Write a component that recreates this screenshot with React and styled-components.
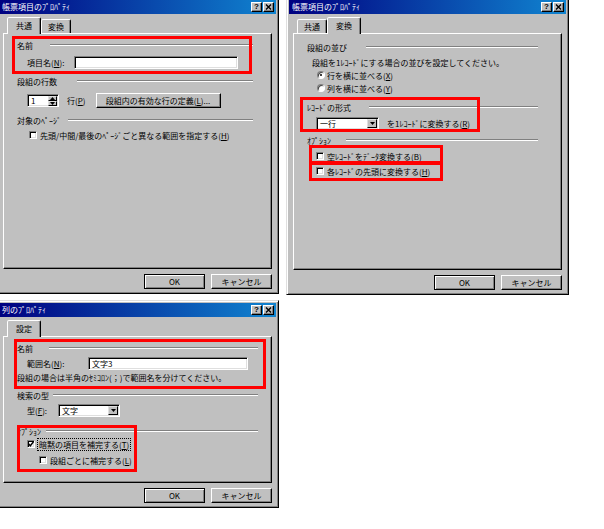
import styled, { createGlobalStyle, css } from 'styled-components';

const GlobalStyle = createGlobalStyle`
  html, body {
    margin: 0;
    padding: 0;
    background: #fff;
  }
  body {
    font-family: 'Noto Sans CJK JP', 'Noto Sans', sans-serif;
    font-size: 8px;
    color: #000;
    overflow: hidden;
  }
`;

const Page = styled.div`
  display: flex;
  flex-direction: column;
  align-items: flex-start;
  width: 604px;
  height: 529px;
`;

const TopRow = styled.div`
  display: flex;
  align-items: flex-start;
  gap: 7px;
`;

const Window = styled.div`
  box-sizing: border-box;
  display: flex;
  flex-direction: column;
  width: 283px;
  height: ${(p) => p.$h}px;
  margin: ${(p) => p.$mt || 0}px 0 0 ${(p) => p.$ml || 0}px;
  padding: 2px;
  background: #c0c0c0;
  border: 1px solid;
  border-color: #dfdfdf #000 #000 #dfdfdf;
  box-shadow: inset 1px 1px #fff, inset -1px -1px #808080;
`;

const TitleBar = styled.div`
  display: flex;
  align-items: center;
  justify-content: space-between;
  height: 14px;
  padding: 0 2px 0 3px;
  background: linear-gradient(90deg, #000080 0%, #1084d0 100%);
  color: #fff;
  white-space: nowrap;
`;

const TitleText = styled.span`
  line-height: 14px;
`;

const TitleButtons = styled.div`
  display: flex;
  gap: 1px;
`;

const TitleButton = styled.div`
  box-sizing: border-box;
  display: flex;
  align-items: center;
  justify-content: center;
  width: 11px;
  height: 10px;
  background: #c0c0c0;
  border: 1px solid;
  border-color: #fff #000 #000 #fff;
  box-shadow: inset -1px -1px #808080;
  color: #000;
  font-family: 'Liberation Sans', sans-serif;
  font-weight: 700;
  font-size: 8px;
  line-height: 1;
`;

const Body = styled.div`
  flex: 1;
  display: flex;
  flex-direction: column;
  padding: 3px 4px 2px 4px;
  min-height: 0;
`;

const TabStrip = styled.div`
  display: flex;
  align-items: flex-end;
  height: 16px;
  padding-left: 4px;
  position: relative;
  z-index: 1;
`;

const Tab = styled.div`
  box-sizing: border-box;
  display: flex;
  align-items: center;
  height: 14px;
  padding: 0 6px;
  background: #c0c0c0;
  border: 1px solid;
  border-bottom: none;
  border-color: #fff #000 transparent #fff;
  border-radius: 2px 2px 0 0;
  box-shadow: inset -1px 0 #808080;
  white-space: nowrap;

  ${(p) =>
    p.$active &&
    css`
      height: 17px;
      padding: 0 8px 1px;
      margin-bottom: -1px;
    `}
`;

const Panel = styled.div`
  flex: 1;
  position: relative;
  display: flex;
  flex-direction: column;
  padding: ${(p) => p.$pt}px ${(p) => p.$pr}px 0 13px;
  border: 1px solid;
  border-color: #fff #000 #000 #fff;
  box-shadow: inset -1px -1px #808080;
`;

const RedBox = styled.div`
  position: absolute;
  box-sizing: border-box;
  left: ${(p) => p.$x}px;
  top: ${(p) => p.$y}px;
  width: ${(p) => p.$w}px;
  height: ${(p) => p.$h}px;
  border: 3px solid #f00;
  pointer-events: none;
`;

const ButtonRow = styled.div`
  display: flex;
  justify-content: flex-end;
  gap: 6px;
  margin-top: 5px;
`;

const PushButton = styled.button`
  box-sizing: border-box;
  display: flex;
  align-items: center;
  justify-content: center;
  width: ${(p) => p.$w}px;
  height: 15px;
  margin: 0;
  padding: 0;
  background: #c0c0c0;
  border: 1px solid;
  border-color: ${(p) => (p.$default ? '#000' : '#fff #000 #000 #fff')};
  box-shadow: ${(p) =>
    p.$default
      ? 'inset 1px 1px #fff, inset -1px -1px #808080'
      : 'inset -1px -1px #808080'};
  font-family: inherit;
  font-size: 8px;
  color: #000;
  white-space: nowrap;
  margin-left: ${(p) => p.$ml || 0}px;
`;

const GroupHeader = styled.div`
  display: grid;
  grid-template-columns: ${(p) => p.$lineAt}px 1fr;
  align-items: center;
  height: 12px;
  margin-top: ${(p) => p.$mt || 0}px;
  white-space: nowrap;
`;

const Etch = styled.div`
  height: 0;
  border-top: 1px solid #808080;
  border-bottom: 1px solid #fff;
`;

const Row = styled.div`
  display: flex;
  align-items: center;
  height: ${(p) => p.$h || 12}px;
  margin-top: ${(p) => p.$mt || 0}px;
  padding-left: ${(p) => p.$indent || 0}px;
  white-space: nowrap;
`;

const FieldLabel = styled.span`
  flex-shrink: 0;
  width: ${(p) => p.$w}px;
`;

const Text = styled.span`
  margin-left: ${(p) => p.$ml || 0}px;
`;

const Key = styled.span`
  text-decoration: underline;
`;

const sunken = css`
  box-sizing: border-box;
  background: #fff;
  border: 1px solid;
  border-color: #808080 #fff #fff #808080;
  box-shadow: inset 1px 1px #000, inset -1px -1px #dfdfdf;
`;

const TextField = styled.div`
  ${sunken};
  display: flex;
  align-items: center;
  width: ${(p) => p.$w}px;
  height: 13px;
  padding-left: 3px;
`;

const SpinField = styled.div`
  ${sunken};
  display: flex;
  width: 32px;
  height: 13px;
  padding: 1px;
`;

const SpinValue = styled.span`
  flex: 1;
  line-height: 9px;
  padding-left: 2px;
`;

const SpinButtons = styled.div`
  display: flex;
  flex-direction: column;
  width: 9px;
`;

const SmallRaised = styled.div`
  box-sizing: border-box;
  display: flex;
  align-items: center;
  justify-content: center;
  background: #c0c0c0;
  border: 1px solid;
  border-color: #dfdfdf #000 #000 #dfdfdf;
`;

const SpinHalf = styled(SmallRaised)`
  flex: 1;
`;

const Select = styled.div`
  ${sunken};
  display: flex;
  align-items: center;
  justify-content: space-between;
  width: ${(p) => p.$w}px;
  height: 13px;
  padding: 1px 1px 1px 3px;
`;

const DropButton = styled(SmallRaised)`
  width: 10px;
  height: 9px;
`;

const CheckBox = styled.span`
  ${sunken};
  display: inline-flex;
  align-items: center;
  justify-content: center;
  flex-shrink: 0;
  width: 8px;
  height: 8px;
  margin-right: 3px;
`;

const Radio = styled.span`
  box-sizing: border-box;
  display: inline-flex;
  align-items: center;
  justify-content: center;
  flex-shrink: 0;
  width: 8px;
  height: 8px;
  margin-right: 2px;
  border-radius: 50%;
  background: #fff;
  border: 1px solid;
  border-color: #808080 #fff #fff #808080;
  box-shadow: inset 1px 1px #404040;

  &::after {
    content: '';
    display: ${(p) => (p.$on ? 'block' : 'none')};
    width: 2px;
    height: 2px;
    background: #000;
    border-radius: 50%;
  }
`;

const Focus = styled.span`
  outline: 1px dotted #000;
  padding: 0 1px;
`;

function Arrow({ up }) {
  return (
    <svg width="5" height="3" viewBox="0 0 5 3">
      <polygon points={up ? '0,3 5,3 2.5,0' : '0,0 5,0 2.5,3'} fill="#000" />
    </svg>
  );
}

function Dialog({ title, tabs, active, height, ml, mt, pt, pr, boxes, children }) {
  return (
    <Window $h={height} $ml={ml} $mt={mt}>
      <TitleBar>
        <TitleText>{title}</TitleText>
        <TitleButtons>
          <TitleButton>?</TitleButton>
          <TitleButton>
            <svg width="7" height="6" viewBox="0 0 7 6">
              <path d="M1 0.5L6 5.5M6 0.5L1 5.5" stroke="#000" strokeWidth="1.4" />
            </svg>
          </TitleButton>
        </TitleButtons>
      </TitleBar>
      <Body>
        <TabStrip>
          {tabs.map((t) => (
            <Tab key={t} $active={t === active}>
              {t}
            </Tab>
          ))}
        </TabStrip>
        <Panel $pt={pt} $pr={pr}>
          {children}
          {boxes.map((b, i) => (
            <RedBox key={i} $x={b[0]} $y={b[1]} $w={b[2]} $h={b[3]} />
          ))}
        </Panel>
        <ButtonRow>
          <PushButton $w={61} $default>
            OK
          </PushButton>
          <PushButton $w={61}>キャンセル</PushButton>
        </ButtonRow>
      </Body>
    </Window>
  );
}

function Check({ checked }) {
  return (
    <CheckBox>
      {checked && (
        <svg width="6" height="6" viewBox="0 0 6 6">
          <polyline points="0.5,2.8 2.3,4.8 5.5,0.8" fill="none" stroke="#000" strokeWidth="1.4" />
        </svg>
      )}
    </CheckBox>
  );
}

function CommonDialog() {
  return (
    <Dialog
      title="帳票項目のﾌﾟﾛﾊﾟﾃｨ"
      tabs={['共通', '変換']}
      active="共通"
      height={297}
      ml={-4}
      mt={-3}
      pt={5}
      pr={18}
      boxes={[[8, 2, 240, 38]]}
    >
      <GroupHeader $lineAt={33}>
        <span>名前</span>
        <Etch />
      </GroupHeader>
      <Row $h={13} $mt={5} $indent={10}>
        <FieldLabel $w={47}>
          項目名(<Key>N</Key>):
        </FieldLabel>
        <TextField $w={164} />
      </Row>
      <GroupHeader $lineAt={60} $mt={6}>
        <span>段組の行数</span>
        <Etch />
      </GroupHeader>
      <Row $h={15} $mt={6} $indent={10}>
        <SpinField>
          <SpinValue>1</SpinValue>
          <SpinButtons>
            <SpinHalf>
              <Arrow up />
            </SpinHalf>
            <SpinHalf>
              <Arrow />
            </SpinHalf>
          </SpinButtons>
        </SpinField>
        <Text $ml={8}>
          行(<Key>P</Key>)
        </Text>
        <PushButton $w={125} $ml={10}>
          段組内の有効な行の定義(<Key>L</Key>)...
        </PushButton>
      </Row>
      <GroupHeader $lineAt={51} $mt={6}>
        <span>対象のﾍﾟｰｼﾞ</span>
        <Etch />
      </GroupHeader>
      <Row $mt={3} $indent={12}>
        <Check />
        <span>
          先頭/中間/最後のﾍﾟｰｼﾞごと異なる範囲を指定する(<Key>H</Key>)
        </span>
      </Row>
    </Dialog>
  );
}

function ConvertDialog() {
  return (
    <Dialog
      title="帳票項目のﾌﾟﾛﾊﾟﾃｨ"
      tabs={['共通', '変換']}
      active="変換"
      height={298}
      mt={-3}
      pt={7}
      pr={23}
      boxes={[
        [6, 63, 180, 35],
        [15, 111, 134, 19],
        [15, 128, 134, 19],
      ]}
    >
      <GroupHeader $lineAt={59}>
        <span>段組の並び</span>
        <Etch />
      </GroupHeader>
      <Row $mt={3} $indent={5}>
        段組を1ﾚｺｰﾄﾞにする場合の並びを設定してください。
      </Row>
      <Row $mt={1} $indent={10}>
        <Radio $on />
        <span>
          行を横に並べる(<Key>X</Key>)
        </span>
      </Row>
      <Row $mt={1} $indent={10}>
        <Radio />
        <span>
          列を横に並べる(<Key>Y</Key>)
        </span>
      </Row>
      <GroupHeader $lineAt={62} $mt={7}>
        <span>ﾚｺｰﾄﾞの形式</span>
        <Etch />
      </GroupHeader>
      <Row $h={13} $mt={4} $indent={9}>
        <Select $w={63}>
          <span>一行</span>
          <DropButton>
            <Arrow />
          </DropButton>
        </Select>
        <Text $ml={8}>
          を1ﾚｺｰﾄﾞに変換する(<Key>R</Key>)
        </Text>
      </Row>
      <GroupHeader $lineAt={39} $mt={4}>
        <span>ｵﾌﾟｼｮﾝ</span>
        <Etch />
      </GroupHeader>
      <Row $mt={4} $indent={9}>
        <Check />
        <span>
          空ﾚｺｰﾄﾞをﾃﾞｰﾀ変換する(<Key>B</Key>)
        </span>
      </Row>
      <Row $mt={3} $indent={9}>
        <Check />
        <span>
          各ﾚｺｰﾄﾞの先頭に変換する(<Key>H</Key>)
        </span>
      </Row>
    </Dialog>
  );
}

function ColumnDialog() {
  return (
    <Dialog
      title="列のﾌﾟﾛﾊﾟﾃｨ"
      tabs={['設定']}
      active="設定"
      height={208}
      ml={-4}
      mt={5}
      pt={5}
      pr={13}
      boxes={[
        [10, 2, 252, 50],
        [13, 88, 120, 47],
      ]}
    >
      <GroupHeader $lineAt={32}>
        <span>名前</span>
        <Etch />
      </GroupHeader>
      <Row $h={13} $mt={3} $indent={10}>
        <FieldLabel $w={61}>
          範囲名(<Key>N</Key>):
        </FieldLabel>
        <TextField $w={160}>文字3</TextField>
      </Row>
      <Row $mt={1}>段組の場合は半角のｾﾐｺﾛﾝ(；)で範囲名を分けてください。</Row>
      <GroupHeader $lineAt={36} $mt={6}>
        <span>検索の型</span>
        <Etch />
      </GroupHeader>
      <Row $h={13} $mt={3} $indent={10}>
        <FieldLabel $w={31}>
          型(<Key>F</Key>):
        </FieldLabel>
        <Select $w={62}>
          <span>文字</span>
          <DropButton>
            <Arrow />
          </DropButton>
        </Select>
      </Row>
      <GroupHeader $lineAt={29} $mt={8}>
        <span>ｵﾌﾟｼｮﾝ</span>
        <Etch />
      </GroupHeader>
      <Row $mt={1} $indent={10}>
        <Check checked />
        <Focus>
          暗黙の項目を補完する(<Key>T</Key>)
        </Focus>
      </Row>
      <Row $mt={4} $indent={22}>
        <Check />
        <span>
          段組ごとに補完する(<Key>L</Key>)
        </span>
      </Row>
    </Dialog>
  );
}

export default function App() {
  return (
    <>
      <GlobalStyle />
      <Page>
        <TopRow>
          <CommonDialog />
          <ConvertDialog />
        </TopRow>
        <ColumnDialog />
      </Page>
    </>
  );
}
